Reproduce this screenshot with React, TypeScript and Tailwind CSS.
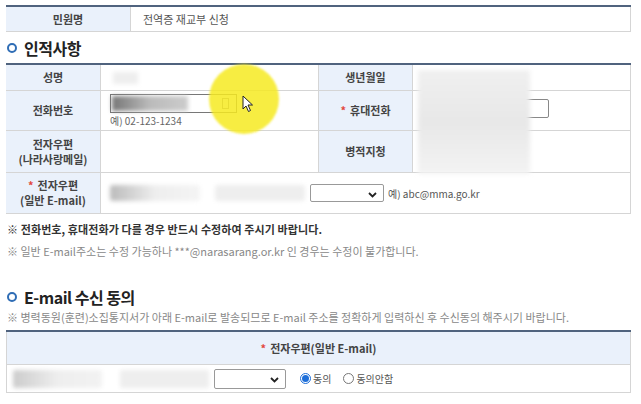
const font = { fontFamily: '"Noto Sans CJK KR", "Noto Sans", sans-serif' };

const Label = ({ children, req, className = "" }: { children: React.ReactNode; req?: boolean; className?: string }) => (
  <div className={`flex items-center justify-center text-center bg-[#eaf1fb] text-[11px] font-bold leading-[15px] text-[#444] ${className}`}>
    <div>
      {req && <span className="text-[#e2483d] mr-1">*</span>}
      {children}
    </div>
  </div>
);

const Blur = ({ className = "" }: { className?: string }) => (
  <div className={`blur-[2px] ${className}`} />
);

const Heading = ({ children }: { children: React.ReactNode }) => (
  <div className="flex items-center gap-[7px] pl-[7px]">
    <span className="w-[10px] h-[10px] rounded-full border-[2.5px] border-[#2f6db5]" />
    <span className="text-[16px] font-bold text-[#222] tracking-[-0.5px]">{children}</span>
  </div>
);

const Chevron = () => (
  <svg width="9" height="6" viewBox="0 0 9 6" className="absolute right-[6px] top-[7px]">
    <path d="M1 1 L4.5 4.5 L8 1" stroke="#222" strokeWidth="1.8" fill="none" />
  </svg>
);

export default function App() {
  return (
    <div style={font} className="w-[641px] h-[404px] bg-white relative overflow-hidden text-[#444]">
      {/* 민원명 */}
      <div className="ml-[6px] mr-[10px] mt-[5px] grid grid-cols-[124px_1fr] border-t-2 border-[#50637e] border-b border-b-[#d5d5d5] h-[27px]">
        <Label>민원명</Label>
        <div className="flex items-center pl-3 text-[11px] text-[#555] border-l border-[#d5d5d5] border-r">전역증 재교부 신청</div>
      </div>

      <div className="mt-[4px] h-[24px] flex items-center">
        <Heading>인적사항</Heading>
      </div>

      {/* 인적사항 table */}
      <div className="ml-[6px] mr-[10px] mt-[3px] border-t-2 border-[#50637e] grid grid-cols-[94px_218px_94px_1fr] grid-rows-[26px_40px_42px_41px] text-[11px] relative">
        <Label className="border-b border-[#d5d5d5]">성명</Label>
        <div className="border-b border-l border-[#d5d5d5] flex items-center pl-[12px]">
          <Blur className="w-[25px] h-[12px] bg-[#eeeeee]" />
        </div>
        <Label className="border-b border-l border-[#d5d5d5]">생년월일</Label>
        <div className="border-b border-l border-r border-[#d5d5d5]" />

        <Label className="border-b border-[#d5d5d5]">전화번호</Label>
        <div className="border-b border-l border-[#d5d5d5] pl-[9px] pt-[3px]">
          <div className="relative w-[127px] h-[19px] border border-[#777] bg-white">
            <Blur className="absolute left-[1px] top-[1px] h-[15px] w-[76px] bg-gradient-to-r from-[#777] via-[#bbb] to-[#ccc]" />
            <span className="absolute right-[7px] top-[3px] w-[7px] h-[11px] border border-[#999]" />
          </div>
          <div className="text-[10px] text-[#666] mt-[1px] leading-[13px]">예) 02-123-1234</div>
        </div>
        <Label req className="border-b border-l border-[#d5d5d5]">휴대전화</Label>
        <div className="border-b border-l border-r border-[#d5d5d5] flex items-center justify-end pr-[81px]">
          <div className="w-[60px] h-[19px] border border-[#888] rounded-[2px] -mt-[4px]" />
        </div>

        <Label className="border-b border-[#d5d5d5]">전자우편<br />(나라사랑메일)</Label>
        <div className="border-b border-l border-[#d5d5d5]" />
        <Label className="border-b border-l border-[#d5d5d5]">병적지청</Label>
        <div className="border-b border-l border-r border-[#d5d5d5]" />

        <Label req className="border-b border-[#d5d5d5]">전자우편<br />(일반 E-mail)</Label>
        <div className="col-span-3 border-b border-l border-r border-[#d5d5d5] flex items-center pl-[9px]">
          <Blur className="w-[90px] h-[16px] rounded-[3px] bg-gradient-to-r from-[#bbb] via-[#eee] to-[#f4f4f4]" />
          <Blur className="ml-[15px] w-[90px] h-[16px] rounded-[3px] bg-[#eeeeee]" />
          <div className="ml-[5px] relative w-[74px] h-[18px] border border-[#999] rounded-[2px] bg-white">
            <Chevron />
          </div>
          <span className="ml-[4px] text-[10px] text-[#555]">예) abc@mma.go.kr</span>
        </div>

        {/* blurred personal info over 생년월일/휴대전화/병적지청 column */}
        <Blur className="absolute left-[412px] top-[5px] w-[112px] h-[104px] bg-gradient-to-b from-[#f0f0f0] via-[#e8e8e8] to-[#f3f3f3]" />
      </div>

      {/* yellow cursor highlight */}
      <div className="absolute left-[209px] top-[64px] w-[70px] h-[70px] rounded-full bg-[#f6ea22] opacity-85 blur-[1px]" />
      <svg className="absolute left-[242px] top-[95px]" width="12" height="18" viewBox="0 0 12 18">
        <path d="M1 1 L1 14 L4 11 L6.5 16.5 L8.5 15.5 L6 10 L10.5 10 Z" fill="#fff" stroke="#222" strokeWidth="1" strokeLinejoin="round" />
      </svg>

      <div className="mt-[7px] pl-[7px] text-[11px] font-bold text-[#333] leading-[16px] tracking-[0.1px]">
        ※ 전화번호, 휴대전화가 다를 경우 반드시 수정하여 주시기 바랍니다.
      </div>
      <div className="mt-[6px] pl-[7px] text-[11px] text-[#888] leading-[16px]">
        ※ 일반 E-mail주소는 수정 가능하나 ***@narasarang.or.kr 인 경우는 수정이 불가합니다.
      </div>

      <div className="mt-[26px] h-[24px] flex items-center">
        <Heading>E-mail 수신 동의</Heading>
      </div>
      <div className="pl-[7px] text-[11px] text-[#888] leading-[16px] mt-[0px]">
        ※ 병력동원(훈련)소집통지서가 아래 E-mail로 발송되므로 E-mail 주소를 정확하게 입력하신 후 수신동의 해주시기 바랍니다.
      </div>

      <div className="ml-[6px] mr-[10px] mt-[5px] border-t-2 border-[#50637e]">
        <Label req className="h-[33px] border-b border-l border-r border-[#d5d5d5] text-[11px]">전자우편(일반 E-mail)</Label>
        <div className="h-[28px] border-b border-l border-r border-[#d5d5d5] flex items-center pl-[6px] text-[10px]">
          <Blur className="w-[89px] h-[18px] rounded-[2px] bg-gradient-to-r from-[#ccc] via-[#eee] to-[#f2f2f2]" />
          <Blur className="ml-[18px] w-[89px] h-[18px] rounded-[2px] bg-[#eeeeee]" />
          <div className="relative w-[72px] h-[20px] border border-[#999] rounded-[2px] bg-white ml-[5px]">
            <Chevron />
          </div>
          <span className="ml-[14px] w-[11px] h-[11px] rounded-full border border-[#1e6fd9] flex items-center justify-center">
            <span className="w-[7px] h-[7px] rounded-full bg-[#1e6fd9]" />
          </span>
          <span className="ml-[2px] text-[#555]">동의</span>
          <span className="ml-[12px] w-[11px] h-[11px] rounded-full border border-[#777]" />
          <span className="ml-[2px] text-[#555]">동의안함</span>
        </div>
      </div>
    </div>
  );
}
